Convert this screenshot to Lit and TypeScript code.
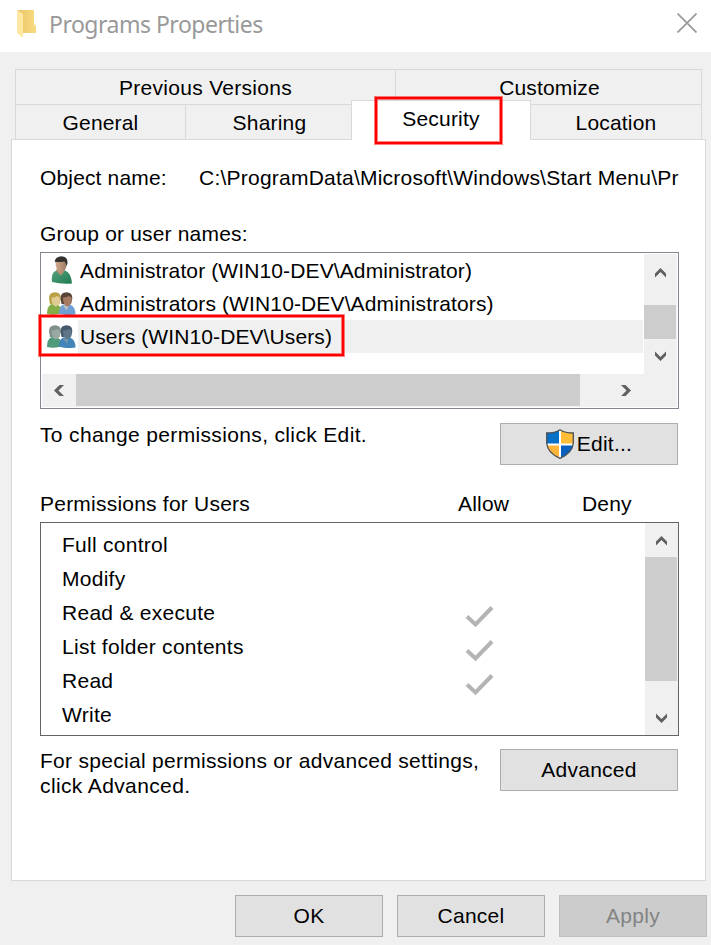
import { LitElement, html, css, svg, nothing } from "lit";
import { customElement, property } from "lit/decorators.js";
import { styleMap } from "lit/directives/style-map.js";

type Direction = "up" | "down" | "left" | "right";

const label = (text: string, spacing = 0.3) =>
  html`<span style=${styleMap({ letterSpacing: `${spacing}px` })}>${text}</span>`;

@customElement("scroll-arrow")
class ScrollArrow extends LitElement {
  @property() direction: Direction = "up";
  static styles = css`
    :host { display: grid; place-items: center; }
    svg { display: block; }
  `;
  render() {
    const paths: Record<Direction, string> = {
      up: "M2 5.500 7.500 0 13 5.500V9.500L7.500 4 2 9.500Z",
      down: "M2 -.5 7.500 5 13 -.5V3.500L7.500 9 2 3.500Z",
      left: "M10 -1 4.500 4.500 10 10H5.500L0 4.500 5.500 -1Z",
      right: "M0 -1 5.500 4.500 0 10H4.500L10 4.500 4.500 -1Z",
    };
    return html`<svg width="16" height="12" viewBox="0 -1 16 12" fill="#606060"><path d=${paths[this.direction]}></path></svg>`;
  }
}

const head = (x: number, hair: string, face: string) => svg`
  <g transform="translate(${x} 0)">
    <path d="M-6 6.500Q-6 .2 0 .2 6 .2 5.800 6.500L4.500 12H-5Z" fill=${hair}></path>
    <path d="M-3.500 5.500Q0 5.500 2 4L5.200 5.500Q5.500 13 1 14.500-3.500 14-3.500 5.500Z" fill=${face}></path>
  </g>`;

@customElement("account-icon")
class AccountIcon extends LitElement {
  @property() kind: "user" | "admins" | "users" = "user";
  static styles = css`
    :host, svg { display: block; }
    .group { margin: 3px 0 0 -1px; }
  `;
  render() {
    if (this.kind === "user") {
      return html`<svg width="28" height="28" viewBox="0 0 28 28">
        <defs>
          <linearGradient id="g" x2="1" y2="1"><stop stop-color="#52a47e"></stop><stop offset="1" stop-color="#207a52"></stop></linearGradient>
          <linearGradient id="k" x2="1"><stop stop-color="#d3ab8e"></stop><stop offset="1" stop-color="#9f7b63"></stop></linearGradient>
        </defs>
        <path d="M4 26Q3 17 7.500 15L11 13.500 17 14.500Q23 16.500 24 27.500 14 28.500 4 26Z" fill="url(#g)"></path>
        <path d="M8 14.500 9 12H16V15.500Q14 19 12.500 19.500Z" fill="#b98f74"></path>
        <path d="M7.500 6Q8 4 13 4 18.500 4 18.500 7 18.500 15.500 13.500 16 7.500 15.500 7.500 6Z" fill="url(#k)"></path>
        <path d="M6.800 6.500Q6.500 1 13 .3 20 .5 19.500 7L18.600 10.500 17.800 7.500 16.500 5.500Q11 6.500 7.500 5.800Z" fill="#34312f"></path>
      </svg>`;
    }
    const dim = this.kind === "users";
    return html`<svg class="group" width="29" height="23" viewBox="0 0 29 23">
      <path d="M0 22Q0 14 4.500 12L11 13Q15 15 15 21.500 7 23.500 0 22Z" fill=${dim ? "#4f9a7b" : "#82ad48"}></path>
      ${dim ? head(8, "#7f8f8c", "#9aa8a2") : head(8, "#b9a144", "#e0cb94")}
      <path d="M12 21.500Q12 15 16 12.500H23Q28.500 14.500 28.500 22.500 19 24 12 21.500Z" fill=${dim ? "#4385b9" : "#6f9fd3"}></path>
      <path d="m16 13.500 4 5 1.500-5Z" fill=${dim ? "#7899ad" : "#c7bfc0"}></path>
      ${dim ? head(19.500, "#46596b", "#5d7688") : head(19.500, "#584538", "#a57a60")}
    </svg>`;
  }
}

@customElement("dialog-button")
class DialogButton extends LitElement {
  @property() text = "";
  @property({ type: Number }) spacing = 0.25;
  @property({ type: Boolean }) shield = false;
  @property({ type: Boolean }) disabled = false;
  static styles = css`
    :host { display: block; width: 148px; height: 42px; flex: none; }
    .button {
      box-sizing: border-box; width: 100%; height: 100%; padding: 0;
      display: flex; align-items: center; justify-content: center; gap: 3px;
      border: 1px solid #adadad; border-radius: 0; background: #e1e1e1; color: #000;
      font: 21px/24px "Liberation Sans", Arial, sans-serif;
    }
    .button:disabled { background: #ccc; border-color: #bfbfbf; color: #838383; }
    svg { display: block; }
  `;
  render() {
    return html`<button class="button" ?disabled=${this.disabled}>
      ${this.shield
        ? html`<svg width="28" height="30" viewBox="0 0 28 30">
            <defs><clipPath id="s"><path d="M14 .7Q19 4 27.300 4V14Q26.500 24 14 29.300 1.500 24 .7 14V4Q9 4 14 .7Z"></path></clipPath></defs>
            <g clip-path="url(#s)">
              <path d="M0 0H14V15H0Z" fill="#0670c6"></path><path d="M14 0H28V15H14Z" fill="#ffbd38"></path>
              <path d="M0 15H14V30H0Z" fill="#ffb637"></path><path d="M14 15H28V30H14Z" fill="#0860bf"></path>
              <path d="M14 0V30M0 15.500H28" stroke="#fff" stroke-width="2"></path>
            </g>
            <path d="M14 .7Q19 4 27.300 4V14Q26.500 24 14 29.300 1.500 24 .7 14V4Q9 4 14 .7Z" fill="none" stroke="#4b5055" stroke-width="1.300"></path>
          </svg>`
        : nothing}${label(this.text, this.spacing)}
    </button>`;
  }
}

@customElement("app-root")
class AppRoot extends LitElement {
  static styles = css`
    :host {
      display: block; width: 711px; height: 945px; overflow: hidden; position: relative;
      background: #f0f0f0; color: #000;
      font: 21px/24px "Liberation Sans", Arial, sans-serif; white-space: nowrap;
    }
    * { box-sizing: border-box; }
    svg { display: block; }
    .title { height: 52px; background: #fff; display: flex; padding: 0 14px 0 17px; }
    .folder { margin-top: 9px; flex: none; }
    .name { flex: 1; margin-left: 12px; color: #999; font: 23px/48px "Noto Sans", sans-serif; }
    .close { margin-top: 13px; }
    .tabs { margin: 17px 0 0 15px; width: 687px; }
    .tabrow { display: flex; height: 35px; }
    .tab { border: 1px solid #d9d9d9; border-width: 1px 0 0 1px; text-align: center; line-height: 36px; }
    .tab:last-child { border-right-width: 1px; }
    .previous { width: 380px; }
    .customize, .location { flex: 1; }
    .customize { padding-left: 2px; }
    .general { width: 170px; }
    .sharing { width: 166px; padding-left: 2px; }
    .security { width: 180px; height: 40px; margin-top: -4px; background: #fff; z-index: 1; border-right-width: 1px; }
    .location { border-left: 0; }
    .panel { margin-left: 11px; width: 695px; height: 742px; background: #fff; border: 1px solid #d9d9d9; padding: 26px 26px 0 28px; }
    .object { display: flex; height: 24px; }
    .key { width: 159px; }
    .path { width: 480px; overflow: hidden; }
    .group { margin-top: 32px; }
    .accounts { margin-top: 6px; width: 639px; height: 157px; border: 1px solid #828790; padding: 1px; display: grid; grid-template: 120px 33px / 602px 33px; }
    .names { overflow: hidden; }
    .account { display: flex; height: 33px; }
    .portrait { width: 36px; padding: 2px 0 0 6px; }
    .who { flex: 1; padding-left: 2px; line-height: 34px; }
    .selected .who { background: #f0f0f0; margin-right: 1px; }
    .track { background: #f0f0f0; display: flex; flex-direction: column; }
    .thumb { background: #cdcdcd; }
    .vertical .arrow { height: 34px; }
    .vertical .thumb { width: 32px; }
    .vertical .end { margin-top: auto; }
    .accounts .vertical { padding: 2px 0 0; }
    .accounts .vertical .thumb { margin-top: 15px; height: 34px; }
    .accounts .vertical .end { height: 35px; }
    .horizontal { grid-column: 1 / -1; flex-direction: row; }
    .horizontal .arrow { width: 34px; padding-left: 5px; box-sizing: border-box; }
    .horizontal .thumb { width: 504px; height: 32px; }
    .horizontal .end { margin-left: 29px; }
    .action { display: flex; justify-content: space-between; width: 638px; }
    .change { margin-top: 14px; }
    .wide { width: 178px; }
    .heading { display: flex; margin-top: 27px; }
    .subject { width: 418px; }
    .allow { width: 124px; }
    .permissions { margin-top: 6px; width: 639px; height: 214px; border: 1px solid #646464; display: flex; }
    .rights { width: 604px; padding-top: 5px; }
    .right { height: 34px; display: flex; line-height: 34px; padding-left: 21px; }
    .right-name { width: 403px; }
    .tick { margin-top: 9px; }
    .permissions .vertical { width: 33px; padding-top: 1px; }
    .permissions .arrow { height: 33px; }
    .permissions .thumb { height: 124px; }
    .special { margin-top: 13px; line-height: 25px; }
    .note { margin-top: -1px; }
    .footer { display: flex; gap: 14px; margin: 14px 0 0 235px; }
    .marker { position: absolute; border: 2px solid #f00; box-shadow: 0 0 0 1px rgba(255,0,0,.5), inset 0 0 0 1px rgba(255,0,0,.5); z-index: 2; pointer-events: none; }
    .mark-tab { left: 375px; top: 97px; width: 127px; height: 47px; }
    .mark-users { left: 39px; top: 315px; width: 305px; height: 41px; }
  `;

  private accounts = [
    { kind: "user", text: "Administrator (WIN10-DEV\\Administrator)", spacing: 0.12 },
    { kind: "admins", text: "Administrators (WIN10-DEV\\Administrators)", spacing: 0.13 },
    { kind: "users", text: "Users (WIN10-DEV\\Users)", spacing: 0.1, selected: true },
  ];

  private rights = [
    { text: "Full control", allow: false },
    { text: "Modify", allow: false },
    { text: "Read & execute", allow: true },
    { text: "List folder contents", allow: true },
    { text: "Read", allow: true },
    { text: "Write", allow: false },
  ];

  render() {
    return html`
      <header class="title">
        <svg class="folder" width="20" height="30" viewBox="0 0 20 30">
          <defs><linearGradient id="f"><stop stop-color="#eac568"></stop><stop offset="1" stop-color="#f9dc82"></stop></linearGradient></defs>
          <path d="M1 1H17V15L19 17V24H5Z" fill="url(#f)"></path>
          <path d="M0 1 6 5V29L0 24Z" fill="#ffe7a2"></path>
        </svg>
        <div class="name">${label("Programs Properties", -0.5)}</div>
        <svg class="close" width="20" height="20" viewBox="0 0 20 20"><path d="M.5.5 19.500 19.500M19.500.5.5 19.500" stroke="#999" stroke-width="1.700"></path></svg>
      </header>
      <nav class="tabs">
        <div class="tabrow">
          <div class="tab previous">${label("Previous Versions", 0.3)}</div>
          <div class="tab customize">${label("Customize", 0.15)}</div>
        </div>
        <div class="tabrow">
          <div class="tab general">${label("General", 0.15)}</div>
          <div class="tab sharing">${label("Sharing", 0.2)}</div>
          <div class="tab security">${label("Security", 0.2)}</div>
          <div class="tab location">${label("Location", 0.2)}</div>
        </div>
      </nav>
      <main class="panel">
        <div class="object">
          <div class="key">${label("Object name:", 0.15)}</div>
          <div class="path">${label("C:\\ProgramData\\Microsoft\\Windows\\Start Menu\\Programs", 0.23)}</div>
        </div>
        <div class="group">${label("Group or user names:", 0.17)}</div>
        <section class="accounts">
          <div class="names">
            ${this.accounts.map((a) => html`<div class="account ${a.selected ? "selected" : ""}">
              <div class="portrait"><account-icon kind=${a.kind}></account-icon></div>
              <div class="who">${label(a.text, a.spacing)}</div>
            </div>`)}
          </div>
          <div class="track vertical">
            <scroll-arrow class="arrow" direction="up"></scroll-arrow>
            <div class="thumb"></div>
            <scroll-arrow class="arrow end" direction="down"></scroll-arrow>
          </div>
          <div class="track horizontal">
            <scroll-arrow class="arrow" direction="left"></scroll-arrow>
            <div class="thumb"></div>
            <scroll-arrow class="arrow end" direction="right"></scroll-arrow>
          </div>
        </section>
        <div class="action change">
          ${label("To change permissions, click Edit.", 0.35)}
          <dialog-button class="wide" text="Edit..." shield></dialog-button>
        </div>
        <div class="heading">
          <div class="subject">${label("Permissions for Users", 0.22)}</div>
          <div class="allow">${label("Allow", 0.2)}</div>
          <div>${label("Deny", 0.15)}</div>
        </div>
        <section class="permissions">
          <div class="rights">
            ${this.rights.map((r) => html`<div class="right">
              <div class="right-name">${label(r.text, 0.27)}</div>
              ${r.allow ? html`<svg class="tick" width="29" height="23" viewBox="0 0 29 23"><path d="M2 11.500 10.500 19.500 27 2.500" fill="none" stroke="#b4b4b4" stroke-width="4"></path></svg>` : nothing}
            </div>`)}
          </div>
          <div class="track vertical">
            <scroll-arrow class="arrow" direction="up"></scroll-arrow>
            <div class="thumb"></div>
            <scroll-arrow class="arrow end" direction="down"></scroll-arrow>
          </div>
        </section>
        <div class="action special">
          <div class="note">${label("For special permissions or advanced settings,", 0.29)}<br />${label("click Advanced.", 0.38)}</div>
          <dialog-button class="wide" text="Advanced"></dialog-button>
        </div>
      </main>
      <footer class="footer">
        <dialog-button text="OK"></dialog-button>
        <dialog-button text="Cancel"></dialog-button>
        <dialog-button text="Apply" disabled></dialog-button>
      </footer>
      <div class="marker mark-tab"></div>
      <div class="marker mark-users"></div>
    `;
  }
}
